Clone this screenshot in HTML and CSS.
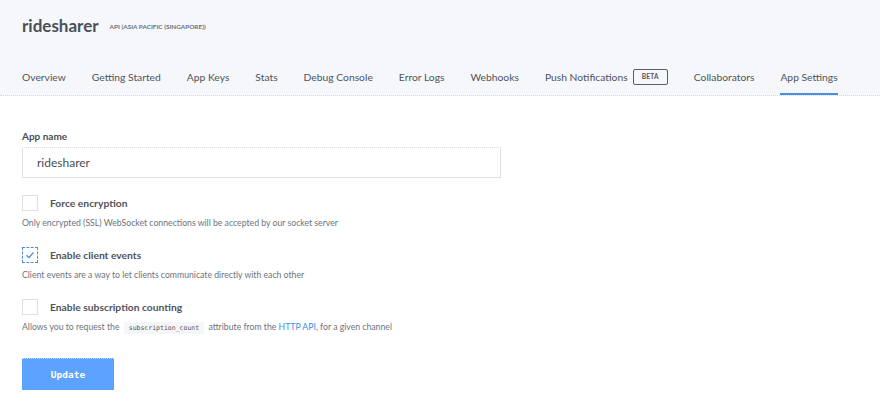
FILE: index.html
```html
<!DOCTYPE html>
<html>
<head>
<meta charset="utf-8">
<link rel="stylesheet" href="styles.css">
</head>
<body>
<header class="header">
  <div class="title-row">
    <h1 class="app-title">ridesharer</h1>
    <span class="cluster">API (ASIA PACIFIC (SINGAPORE))</span>
  </div>
  <nav class="tabs">
    <a class="tab">Overview</a>
    <a class="tab">Getting Started</a>
    <a class="tab">App Keys</a>
    <a class="tab">Stats</a>
    <a class="tab">Debug Console</a>
    <a class="tab">Error Logs</a>
    <a class="tab">Webhooks</a>
    <a class="tab">Push Notifications <span class="beta">BETA</span></a>
    <a class="tab">Collaborators</a>
    <a class="tab active">App Settings</a>
  </nav>
</header>
<main class="content">
  <label class="field-label">App name</label>
  <div class="input">ridesharer</div>

  <div class="option">
    <div class="check-row"><span class="box"></span><span class="opt-label">Force encryption</span></div>
    <p class="desc">Only encrypted (SSL) WebSocket connections will be accepted by our socket server</p>
  </div>
  <div class="option">
    <div class="check-row"><span class="box checked"><svg width="10" height="8" viewBox="0 0 10 8"><path d="M1.5 4.2 L4 6.5 L8.5 1.5" fill="none" stroke="#4a90e2" stroke-width="1.3"/></svg></span><span class="opt-label">Enable client events</span></div>
    <p class="desc">Client events are a way to let clients communicate directly with each other</p>
  </div>
  <div class="option">
    <div class="check-row"><span class="box"></span><span class="opt-label">Enable subscription counting</span></div>
    <p class="desc">Allows you to request the <code class="code">subscription_count</code> attribute from the <a class="link">HTTP API</a>, for a given channel</p>
  </div>
  <button class="btn">Update</button>
</main>
</body>
</html>
```
FILE: styles.css
```css
* { box-sizing: border-box; }
html, body { margin: 0; padding: 0; background: #fff; }
body { font-family: Lato, "Open Sans", sans-serif; color: #4a4f57; }
.header {
  background: #f5f7fa;
  border-bottom: 1px dotted #d5dae2;
  padding: 0 22px;
  height: 96px;
  display: flex;
  flex-direction: column;
}
.title-row {
  display: flex;
  align-items: baseline;
  gap: 11px;
  padding-top: 14px;
  height: 60px;
}
.app-title {
  margin: 0;
  font-size: 17px;
  line-height: 24px;
  font-weight: 700;
  color: #4b5058;
}
.cluster {
  font-size: 6.4px;
  font-weight: 700;
  color: #6b717a;
  position: relative;
  top: -3px;
}
.tabs {
  display: flex;
  gap: 26px;
  height: 35px;
}
.tab {
  font-size: 10.3px;
  color: #4f545c;
  white-space: nowrap;
  display: flex;
  align-items: center;
  height: 35px;
  padding-top: 1px;
  border-bottom: 2.5px solid transparent;
}
.tab.active { border-bottom-color: #4a90e2; }
.beta {
  display: inline-block;
  margin-left: 5px;
  border: 1.5px solid #585d66;
  border-radius: 2px;
  font-size: 6.5px;
  font-weight: 700;
  line-height: 8px;
  padding: 3px 8px;
  letter-spacing: 0.3px;
  color: #4f545c;
}
.content { padding: 34px 22px; }
.field-label {
  display: block;
  font-size: 10px;
  font-weight: 700;
  color: #4a4f57;
  margin-bottom: 5px;
}
.input {
  width: 479px;
  height: 31px;
  border: 1px solid #dde1e7;
  border-top-style: dotted;
  padding: 0 14px;
  font-size: 12px;
  line-height: 29px;
  color: #4a4f57;
}
.option { margin-top: 17px; }
.option + .option { margin-top: 19px; }
.check-row { display: flex; align-items: center; gap: 12px; }
.box {
  width: 16px;
  height: 16px;
  border: 1px solid #dde1e7;
  display: flex;
  align-items: center;
  justify-content: center;
}
.box.checked { border: 1px dashed #4a90e2; }
.opt-label { font-size: 10.3px; font-weight: 700; color: #4f545c; }
.desc {
  margin: 7px 0 0;
  font-size: 8.7px;
  line-height: 10px;
  color: #6d737c;
}
.code {
  font-family: "DejaVu Sans Mono", monospace;
  font-size: 6.5px;
  background: #f4f6f9;
  padding: 2px 5px;
  margin: 0 2px;
  color: #555;
}
.link { color: #3b8fe8; }
.btn {
  display: block;
  margin-top: 25px;
  width: 92px;
  height: 32px;
  border: none;
  border-top: 1px dotted #cfd8e3;
  background: #5ba3ff;
  color: #fff;
  font-family: "DejaVu Sans Mono", monospace;
  font-size: 9.5px;
  font-weight: 700;
}
```
